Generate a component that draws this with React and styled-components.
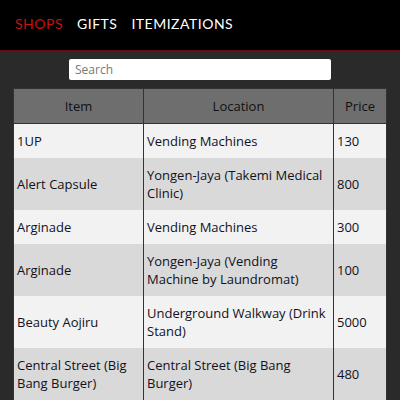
import React from 'react';
import styled, { createGlobalStyle } from 'styled-components';

const rows = [
  { item: '1UP', location: 'Vending Machines', price: 130 },
  { item: 'Alert Capsule', location: 'Yongen-Jaya (Takemi Medical Clinic)', price: 800 },
  { item: 'Arginade', location: 'Vending Machines', price: 300 },
  { item: 'Arginade', location: 'Yongen-Jaya (Vending Machine by Laundromat)', price: 100 },
  { item: 'Beauty Aojiru', location: 'Underground Walkway (Drink Stand)', price: 5000 },
  { item: 'Central Street (Big Bang Burger)', location: 'Central Street (Big Bang Burger)', price: 480 },
];

export default function App() {
  return (
    <Page>
      <GlobalStyle />
      <Header>
        <NavLink active>SHOPS</NavLink>
        <NavLink>GIFTS</NavLink>
        <NavLink>ITEMIZATIONS</NavLink>
      </Header>
      <Content>
        <Search placeholder="Search" />
        <Table>
          <colgroup>
            <col style={{ width: 130 }} />
            <col style={{ width: 190 }} />
            <col />
          </colgroup>
          <thead>
            <tr>
              <Th>Item</Th>
              <Th>Location</Th>
              <Th>Price</Th>
            </tr>
          </thead>
          <tbody>
            {rows.map((r, i) => (
              <Row key={i} odd={i % 2 === 1}>
                <Td>{r.item}</Td>
                <Td>{r.location}</Td>
                <Td>{r.price}</Td>
              </Row>
            ))}
          </tbody>
        </Table>
      </Content>
    </Page>
  );
}

const GlobalStyle = createGlobalStyle`
  * {
    box-sizing: border-box;
  }
  body {
    margin: 0;
    background: #2a2a2a;
    overflow: hidden;
  }
`;

const Page = styled.div`
  width: 400px;
  height: 400px;
  overflow: hidden;
  background: #2a2a2a;
`;

const Header = styled.nav`
  height: 51px;
  background: #000;
  border-bottom: 1px solid #6a0a0a;
  display: flex;
  align-items: center;
  padding: 0 0 3px 15px;
  gap: 14px;
`;

const NavLink = styled.span`
  font-family: Lato, "Liberation Sans", sans-serif;
  font-size: 14px;
  letter-spacing: 0.5px;
  color: ${(p) => (p.active ? '#c8100e' : '#ffffff')};
  cursor: pointer;
`;

const Content = styled.div`
  display: flex;
  flex-direction: column;
  align-items: center;
  padding-top: 8px;
`;

const Search = styled.input`
  width: 262px;
  height: 21px;
  border: none;
  border-radius: 2px;
  padding: 0 6px;
  font-family: "Open Sans", sans-serif;
  font-size: 12px;
  outline: none;
  &::placeholder {
    color: #777;
  }
`;

const Table = styled.table`
  margin-top: 8px;
  width: 374px;
  border-collapse: collapse;
  table-layout: fixed;
  font-family: "Open Sans", sans-serif;
  font-size: 13px;
  line-height: 18px;
  color: #111122;
`;

const Th = styled.th`
  background: #6e6e6e;
  border: 1px solid #333;
  font-weight: normal;
  height: 35px;
  padding: 0 3px;
  text-align: center;
  color: #111;
`;

const Row = styled.tr`
  background: ${(p) => (p.odd ? '#d9d9d9' : '#f2f2f2')};
`;

const Td = styled.td`
  border-left: 1px solid #333;
  border-right: 1px solid #333;
  padding: 8px 3px;
  vertical-align: middle;
  text-align: left;
`;
